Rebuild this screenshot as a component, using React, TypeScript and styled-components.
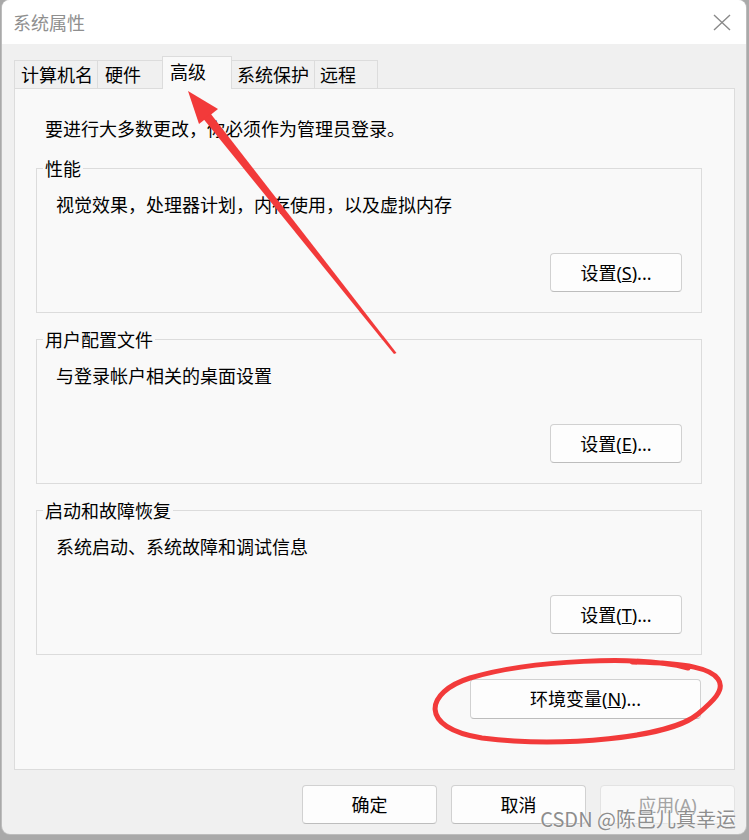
import React from "react";
import styled, { createGlobalStyle } from "styled-components";

const GlobalStyle = createGlobalStyle`
  html, body {
    margin: 0;
    padding: 0;
    background: #a9a9a9;
  }
  body {
    width: 749px;
    height: 840px;
    overflow: hidden;
    font-family: "Noto Sans", "Noto Sans CJK SC", sans-serif;
  }
`;

const Window = styled.div`
  position: relative;
  margin-left: 2px;
  width: 744px;
  height: 834px;
  border-radius: 8px;
  overflow: hidden;
  background: #f0f0f0;
  display: flex;
  flex-direction: column;
  box-shadow: 0 0 0 1px #bdbdbd;
`;

const TitleBar = styled.div`
  height: 44px;
  flex: none;
  background: #ffffff;
  display: flex;
  align-items: center;
  justify-content: space-between;
  padding: 0 15px 0 11px;
`;

const Title = styled.span`
  font-family: "Noto Sans CJK SC", sans-serif;
  font-size: 18px;
  line-height: 24px;
  color: #8f8f8f;
`;

const Body = styled.div`
  flex: 1;
  display: flex;
  flex-direction: column;
  padding: 12px 11px 10px 12px;
`;

const TabRow = styled.div`
  display: flex;
  align-items: flex-end;
  height: 32px;
  flex: none;
`;

const Tab = styled.div<{ $active?: boolean; $w: number; $pl: number }>`
  box-sizing: border-box;
  width: ${p => p.$w}px;
  height: ${p => (p.$active ? 33 : 29)}px;
  padding-left: ${p => p.$pl}px;
  margin-bottom: -1px;
  border: 1px solid #dcdcdc;
  border-bottom: ${p => (p.$active ? "none" : "1px solid #dcdcdc")};
  margin-left: -1px;
  background: ${p => (p.$active ? "#f9f9f9" : "#f0f0f0")};
  position: relative;
  z-index: ${p => (p.$active ? 2 : 1)};
  font-family: "Noto Sans CJK SC", sans-serif;
  font-size: 18px;
  line-height: ${p => (p.$active ? 28 : 27)}px;
  color: #000;
  white-space: nowrap;
  &:first-child {
    margin-left: 0;
  }
`;

const Panel = styled.div`
  flex: 1;
  background: #f9f9f9;
  border: 1px solid #dcdcdc;
  padding: 27px 32px 0 21px;
  display: flex;
  flex-direction: column;
`;

const Intro = styled.div`
  font-family: "Noto Sans CJK SC", sans-serif;
  font-size: 18px;
  line-height: 24px;
  padding-left: 9px;
  margin-bottom: 19px;
  color: #000;
`;

const Group = styled.fieldset`
  margin: 0 0 17px 0;
  padding: 0;
  border: 1px solid #dcdcdc;
  min-width: 0;
  &:last-of-type {
    margin-bottom: 0;
  }
`;

const Legend = styled.legend`
  margin-left: 6px;
  padding: 0 2px;
  font-family: "Noto Sans CJK SC", sans-serif;
  font-size: 18px;
  line-height: 18px;
  color: #000;
`;

const GroupBody = styled.div`
  display: flex;
  flex-direction: column;
  padding: 15px 19px 20px 19px;
`;

const Desc = styled.div`
  font-family: "Noto Sans CJK SC", sans-serif;
  font-size: 18px;
  line-height: 24px;
  color: #000;
`;

const Button = styled.button<{ $w: number; $h?: number }>`
  box-sizing: border-box;
  width: ${p => p.$w}px;
  height: ${p => p.$h ?? 39}px;
  border: 1px solid #d1d1d1;
  border-bottom-color: #bdbdbd;
  border-radius: 4px;
  background: #fdfdfd;
  color: #000;
  font-family: "Noto Sans", "Noto Sans CJK SC", sans-serif;
  font-size: 18px;
  line-height: 24px;
  padding: 0;
  display: flex;
  align-items: center;
  justify-content: center;
  &:disabled {
    background: #f9f9f9;
    border-color: #e3e3e3;
    color: #a3a3a3;
  }
`;

const GroupButton = styled(Button)`
  align-self: flex-end;
  margin-top: 37px;
`;

const EnvRow = styled.div`
  display: flex;
  justify-content: flex-end;
  margin-top: 24px;
  padding-right: 1px;
`;

const Footer = styled.div`
  display: flex;
  justify-content: flex-end;
  gap: 14px;
  margin-top: 15px;
  flex: none;
`;

const Watermark = styled.div`
  position: absolute;
  right: 10px;
  bottom: 3px;
  font-family: "Noto Sans CJK SC", sans-serif;
  font-size: 20px;
  line-height: 24px;
  color: #8e8e8e;
  text-shadow: 0 0 2px #ffffff, 0 0 1px #ffffff;
  pointer-events: none;
`;

const Annotations = styled.svg`
  position: fixed;
  left: 0;
  top: 0;
  pointer-events: none;
  z-index: 10;
`;

const CloseIcon = () => (
  <svg width="18" height="17" viewBox="0 0 18 17">
    <path d="M1 1 L17 16 M17 1 L1 16" stroke="#8a8a8a" strokeWidth="1.4" fill="none" />
  </svg>
);

const groups = [
  { title: "性能", desc: "视觉效果，处理器计划，内存使用，以及虚拟内存", key: "S" },
  { title: "用户配置文件", desc: "与登录帐户相关的桌面设置", key: "E" },
  { title: "启动和故障恢复", desc: "系统启动、系统故障和调试信息", key: "T" },
];

const tabs = [
  { label: "计算机名", w: 84, pl: 6 },
  { label: "硬件", w: 66, pl: 7 },
  { label: "高级", w: 70, pl: 7, active: true },
  { label: "系统保护", w: 84, pl: 5 },
  { label: "远程", w: 64, pl: 5 },
];

export default function App() {
  return (
    <>
      <GlobalStyle />
      <Window>
        <TitleBar>
          <Title>系统属性</Title>
          <CloseIcon />
        </TitleBar>
        <Body>
          <TabRow>
            {tabs.map(t => (
              <Tab key={t.label} $active={t.active} $w={t.w} $pl={t.pl}>
                {t.label}
              </Tab>
            ))}
          </TabRow>
          <Panel>
            <Intro>要进行大多数更改，你必须作为管理员登录。</Intro>
            {groups.map(g => (
              <Group key={g.title}>
                <Legend>{g.title}</Legend>
                <GroupBody>
                  <Desc>{g.desc}</Desc>
                  <GroupButton $w={132}>
                    设置(<u>{g.key}</u>)...
                  </GroupButton>
                </GroupBody>
              </Group>
            ))}
            <EnvRow>
              <Button $w={231} $h={40}>
                环境变量(<u>N</u>)...
              </Button>
            </EnvRow>
          </Panel>
          <Footer>
            <Button $w={135}>确定</Button>
            <Button $w={135}>取消</Button>
            <Button $w={135} disabled>
              应用(A)
            </Button>
          </Footer>
        </Body>
        <Watermark>CSDN @陈邑儿真幸运</Watermark>
      </Window>
      <Annotations width="749" height="840" viewBox="0 0 749 840">
        <polygon points="188,91 218,109 199,124" fill="#f23a3a" />
        <polygon points="203.5,119 210.5,113.5 396.5,353 394,354" fill="#f23a3a" />
        <path
          d="M688 668 C 640 655, 530 660, 470 678 C 425 692, 418 728, 482 738 C 560 748, 670 738, 698 714 C 712 702, 726 690, 718 679 C 711 669, 690 663, 632 662"
          fill="none"
          stroke="#f23a3a"
          strokeWidth="5"
          strokeLinecap="round"
        />
      </Annotations>
    </>
  );
}
